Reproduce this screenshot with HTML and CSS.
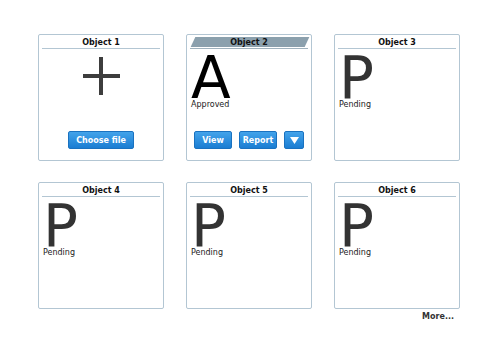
FILE: index.html
```html
<!DOCTYPE html>
<html lang="en">
  <head>
    <meta charset="UTF-8" />
    <title>Objects</title>
    <link rel="stylesheet" href="styles.css">
  </head>
  <body>
    <div class="container">
      <div class="grid">
        <div class="card">
          <div class="card-header"><span>Object 1</span></div>
          <div class="card-body upload">
            <div class="plus"></div>
          </div>
          <div class="card-actions center">
            <button class="btn wide">Choose file</button>
          </div>
        </div>

        <div class="card">
          <div class="card-header selected"><span>Object 2</span></div>
          <div class="card-body">
            <div class="glyph approved">A</div>
            <div class="caption">Approved</div>
          </div>
          <div class="card-actions">
            <button class="btn">View</button>
            <button class="btn">Report</button>
            <button class="btn small">
              <svg width="9" height="7" viewBox="0 0 9 7"><path d="M0 0 L9 0 L4.5 7 Z" fill="#fff" /></svg>
            </button>
          </div>
        </div>

        <div class="card">
          <div class="card-header"><span>Object 3</span></div>
          <div class="card-body">
            <div class="glyph">P</div>
            <div class="caption">Pending</div>
          </div>
        </div>

        <div class="card">
          <div class="card-header"><span>Object 4</span></div>
          <div class="card-body">
            <div class="glyph">P</div>
            <div class="caption">Pending</div>
          </div>
        </div>

        <div class="card">
          <div class="card-header"><span>Object 5</span></div>
          <div class="card-body">
            <div class="glyph">P</div>
            <div class="caption">Pending</div>
          </div>
        </div>

        <div class="card">
          <div class="card-header"><span>Object 6</span></div>
          <div class="card-body">
            <div class="glyph">P</div>
            <div class="caption">Pending</div>
          </div>
        </div>
      </div>
      <div class="more">More...</div>
    </div>
  </body>
</html>
```

FILE: styles.css
```css
body {
  font-family: "DejaVu Sans", Verdana, sans-serif;
  margin: 0;
  padding: 0;
  background: #fff;
  color: #222;
}

.container {
  padding: 34px 30px 0 38px;
}

.grid {
  display: grid;
  grid-template-columns: repeat(3, 126px);
  grid-auto-rows: 127px;
  column-gap: 22px;
  row-gap: 21px;
}

.card {
  border: 1px solid #b3c6d3;
  border-radius: 2px;
  display: flex;
  flex-direction: column;
  background: #fff;
}

.card-header {
  height: 12px;
  margin: 1px 3px 0;
  border-bottom: 1px solid #b3c6d3;
  display: flex;
  align-items: center;
  justify-content: center;
  font-size: 8px;
  font-weight: bold;
  color: #111;
}

.card-header.selected {
  position: relative;
  border-bottom-color: #9fb1bd;
}

.card-header.selected::before {
  content: "";
  position: absolute;
  left: 3px;
  right: 1px;
  top: 1px;
  bottom: 1px;
  background: #8ba0ad;
  transform: skewX(-25deg);
}

.card-header span {
  position: relative;
}

.card-body {
  flex: 1;
  padding: 0 4px;
}

.glyph {
  font-size: 58px;
  line-height: 43px;
  margin-top: 8px;
  color: #333;
}

.glyph.approved {
  color: #000;
}

.caption {
  font-size: 8px;
  line-height: 10px;
  color: #222;
}

.upload {
  display: flex;
  justify-content: center;
}

.plus {
  position: relative;
  width: 37px;
  height: 38px;
  margin-top: 8px;
}

.plus::before,
.plus::after {
  content: "";
  position: absolute;
  background: #3d3d3d;
}

.plus::before {
  left: 0;
  right: 0;
  top: 17px;
  height: 4px;
}

.plus::after {
  top: 0;
  bottom: 0;
  left: 16px;
  width: 4px;
}

.card-actions {
  display: flex;
  gap: 7px;
  padding: 0 7px 11px;
}

.card-actions.center {
  justify-content: center;
}

.btn {
  height: 18px;
  width: 38px;
  padding: 0;
  font-family: "DejaVu Sans", Verdana, sans-serif;
  font-size: 8px;
  font-weight: bold;
  color: #fff;
  background: linear-gradient(#43a3ea, #1b7dd2);
  border: 1px solid #1a72c0;
  border-radius: 2px;
  display: flex;
  align-items: center;
  justify-content: center;
}

.btn.wide {
  width: 66px;
}

.btn.small {
  width: 20px;
}

.more {
  font-size: 8px;
  font-weight: bold;
  color: #333;
  text-align: right;
  padding: 3px 6px 0 0;
}
```
